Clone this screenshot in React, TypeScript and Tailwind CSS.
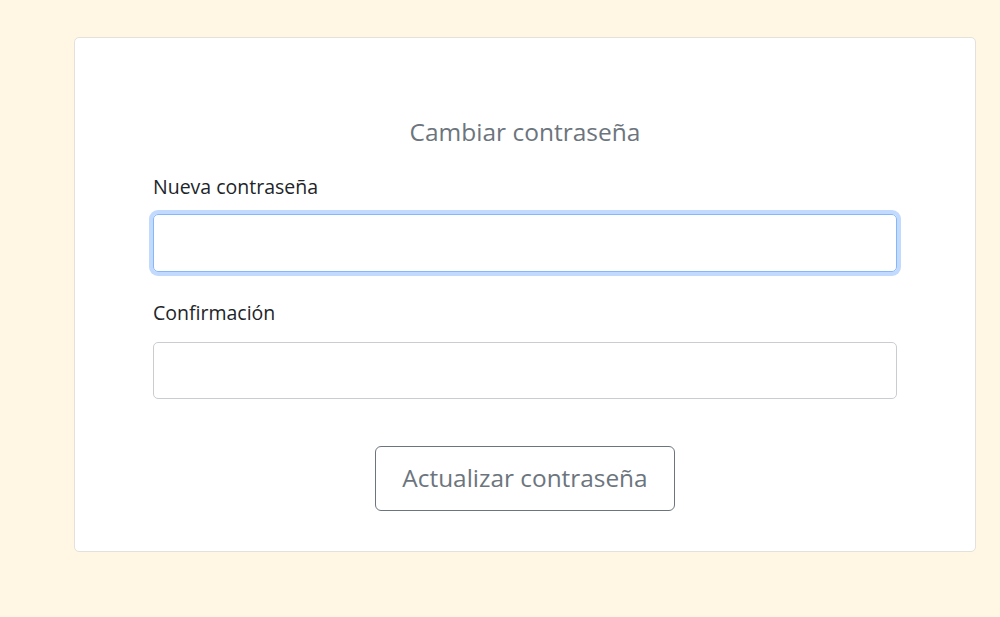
export default function App() {
  return (
    <div
      className="min-h-screen bg-[#fff6e4] pt-[37px] pl-[74px]"
      style={{ fontFamily: '"Open Sans", "Noto Sans", sans-serif' }}
    >
      <div className="w-[902px] h-[515px] bg-white border border-[#e3e1dc] rounded-[5px] px-[78px] pt-[77px]">
        <h2 className="text-center text-[24.5px] leading-[33px] text-[#6c757d]">Cambiar contraseña</h2>
        <label htmlFor="password" className="block mt-[26px] text-[19.5px] leading-[26px] text-[#212529]">
          Nueva contraseña
        </label>
        <input
          id="password"
          type="password"
          className="block w-full h-[58px] mt-[14px] border border-[#86b7fe] rounded-[5px] outline-none shadow-[0_0_0_4px_#c1dafe]"
        />
        <label htmlFor="confirm" className="block mt-[28px] text-[19.5px] leading-[26px] text-[#212529]">
          Confirmación
        </label>
        <input
          id="confirm"
          type="password"
          className="block w-full h-[57px] mt-[16px] border border-[#c9cdd1] rounded-[5px] outline-none"
        />
        <div className="flex justify-center mt-[47px]">
          <button
            type="button"
            className="w-[300px] h-[65px] border border-[#6c757d] rounded-[6px] text-[24.4px] text-[#6c757d] bg-white"
          >
            Actualizar contraseña
          </button>
        </div>
      </div>
    </div>
  );
}
